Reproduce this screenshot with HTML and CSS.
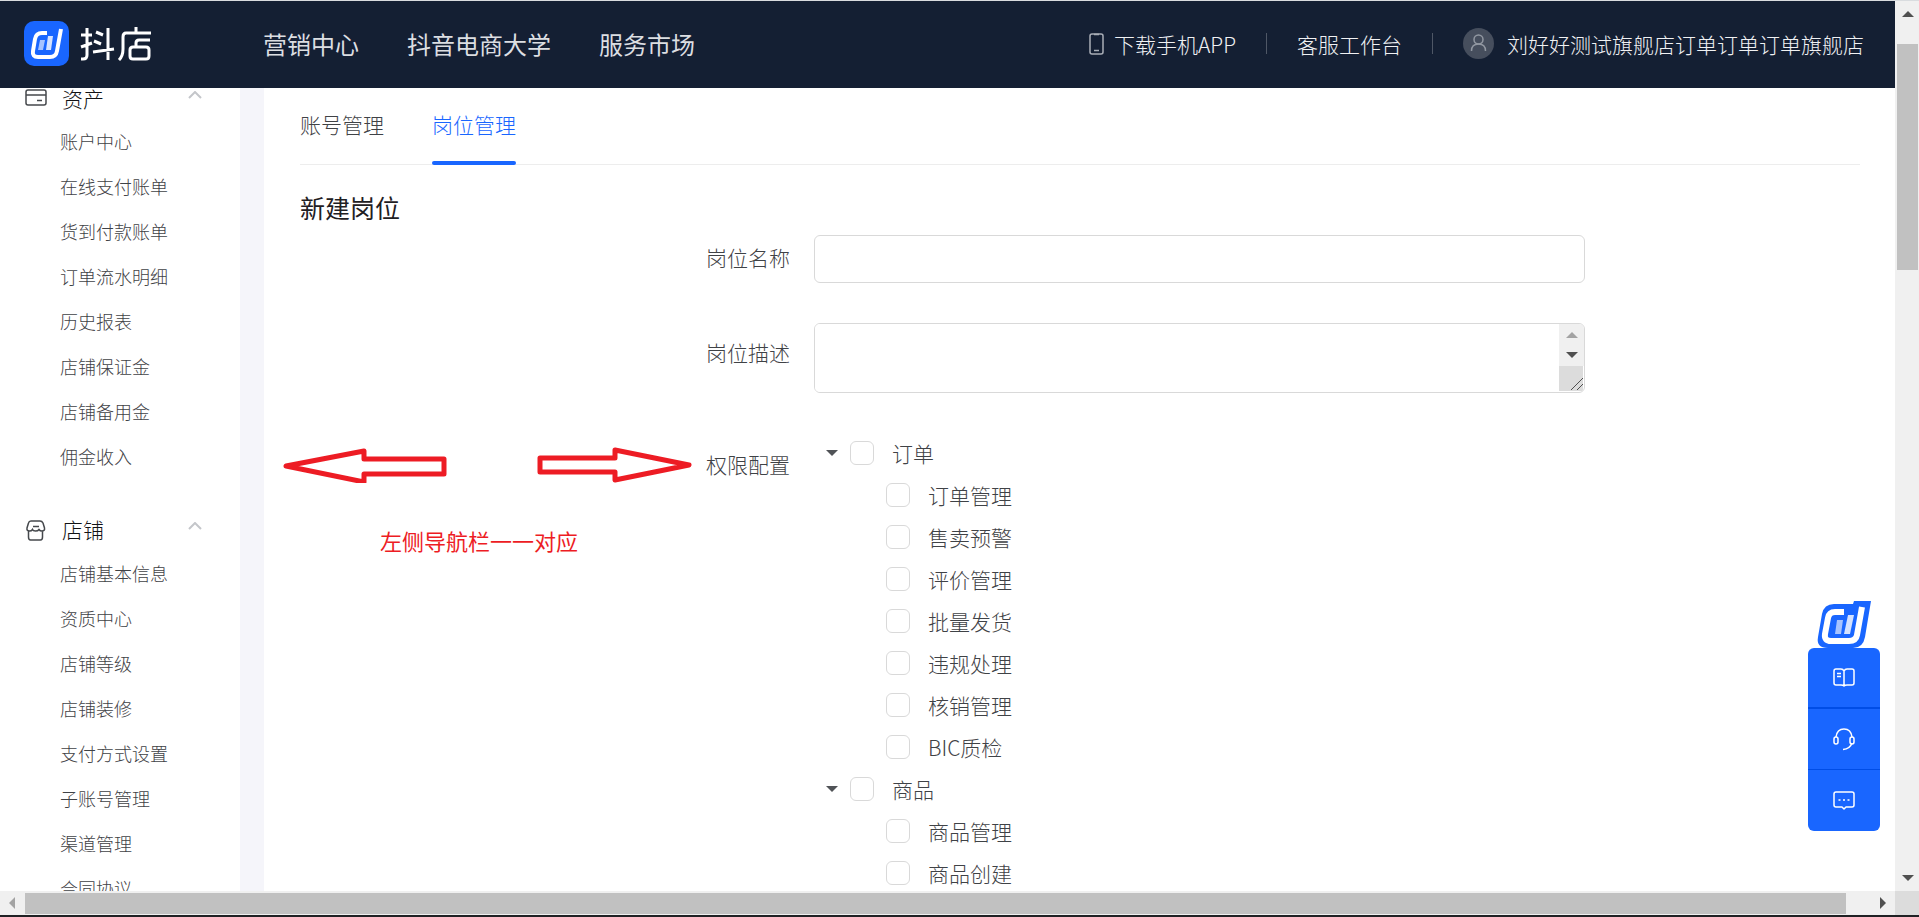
FILE: index.html
```html
<!DOCTYPE html>
<html lang="zh-CN">
<head>
<meta charset="utf-8">
<title>抖店 - 岗位管理</title>
<link rel="stylesheet" href="styles.css">
</head>
<body>
<div class="window">
  <div class="viewport">
    <header class="header">
      <a class="brand" href="#">
        <svg class="brand-mark" viewBox="0 0 45 45"><rect width="45" height="45" rx="10" fill="#1966ff"/><path d="M23 12h-5q-6 0-7 6l-2 12q-1 6 5 6h12q6 0 7-6l4-22" fill="none" stroke="#fff" stroke-width="4"/><path d="M16 19h5l-2 10h-5z" fill="#a6c3ff"/><path d="M24 15h5l-2 14h-5z" fill="#d4e2ff"/></svg>
        <svg class="brand-name" viewBox="0 0 71 34" role="img" aria-label="抖店" fill="none" stroke="#fff" stroke-width="3"><path d="M1 8h11M7 1v27q0 4-4 4H1M1 20l11-4M16 5l7 3M14 14l7 3M13 25l21-3M28 1v32M56 0v5M71 6H46q-3 0-3 4v12q0 7-4 11M70 13H59q-3 0-3 3v4M53 20h13q3 0 3 3v6q0 3-3 3H53q-3 0-3-3v-6q0-3 3-3z"/></svg>
      </a>
      <nav class="topnav"><a href="#">营销中心</a><a href="#">抖音电商大学</a><a href="#">服务市场</a></nav>
      <div class="tools">
        <a class="tool" href="#"><svg width="15" height="22" viewBox="0 0 15 22" fill="none" stroke="#a9aeb7" stroke-width="1.500"><rect x="1" y="1" width="13" height="20" rx="2"/><path d="M5 1.500h5M5 17.500h5"/></svg>下载手机APP</a>
        <i class="split"></i>
        <a class="tool" href="#">客服工作台</a>
        <i class="split"></i>
        <a class="tool user" href="#"><svg width="31" height="31" viewBox="0 0 31 31"><circle cx="15.500" cy="15.500" r="15.500" fill="#464e5d"/><g fill="none" stroke="#9298a2" stroke-width="1.500"><circle cx="15.500" cy="11.500" r="4.500"/><path d="M8.500 23q0-7 7-7t7 7"/></g></svg>刘好好测试旗舰店订单订单订单旗舰店</a>
      </div>
    </header>
    <div class="body">
      <aside class="sidebar">
        <section class="group">
          <h2><svg width="22" height="18" viewBox="0 0 22 18" fill="none" stroke="#45484c" stroke-width="1.500"><rect x="1" y="1" width="20" height="15" rx="2"/><path d="M1 6h20M12 11.500h5"/></svg><span>资产</span><svg class="fold" width="14" height="8" viewBox="0 0 14 8"><path d="M1 7l6-6 6 6"/></svg></h2>
          <a href="#">账户中心</a><a href="#">在线支付账单</a><a href="#">货到付款账单</a><a href="#">订单流水明细</a><a href="#">历史报表</a><a href="#">店铺保证金</a><a href="#">店铺备用金</a><a href="#">佣金收入</a>
        </section>
        <section class="group">
          <h2><svg width="22" height="21" viewBox="-1 0 22 21" fill="none" stroke="#45484c" stroke-width="1.500"><path d="M5 1h9q2 0 3 2l1.500 5q.5 3-2.500 3-2 0-3-1.500Q12 11 9.500 11T6.500 9.500Q5.500 11 3.500 11 .5 11 1 8l1.500-5Q3 1 5 1zM2.500 11v6q0 3 2 3h10q2 0 2-3v-6M7 6.500h6"/></svg><span>店铺</span><svg class="fold" width="14" height="8" viewBox="0 0 14 8"><path d="M1 7l6-6 6 6"/></svg></h2>
          <a href="#">店铺基本信息</a><a href="#">资质中心</a><a href="#">店铺等级</a><a href="#">店铺装修</a><a href="#">支付方式设置</a><a href="#">子账号管理</a><a href="#">渠道管理</a><a href="#">合同协议</a>
        </section>
      </aside>
      <main class="main">
        <div class="tabs"><a href="#">账号管理</a><a class="active" href="#">岗位管理</a></div>
        <h1>新建岗位</h1>
        <form class="form">
          <label class="label" for="name">岗位名称</label>
          <input class="field" id="name" type="text">
          <label class="label label-desc" for="desc">岗位描述</label>
          <div class="area">
            <textarea id="desc"></textarea>
            <div class="area-bar"><svg viewBox="0 0 25 67"><path fill="#f0f0f0" d="M0 0h25v42H0z"/><path fill="#a3a3a3" d="M7 14l6-6 6 6z"/><path fill="#505050" d="M7 28h12l-6 6z"/><path fill="#dcdcdc" d="M0 42h24v25H0z"/><path d="M12 66l12-12M18 66l6-6" stroke="#505050"/></svg></div>
          </div>
          <span class="label label-tree">权限配置</span>
          <div class="tree">
            <div class="node"><span class="caret"></span><label><input type="checkbox">订单</label></div>
            <div class="node leaf"><label><input type="checkbox">订单管理</label></div>
            <div class="node leaf"><label><input type="checkbox">售卖预警</label></div>
            <div class="node leaf"><label><input type="checkbox">评价管理</label></div>
            <div class="node leaf"><label><input type="checkbox">批量发货</label></div>
            <div class="node leaf"><label><input type="checkbox">违规处理</label></div>
            <div class="node leaf"><label><input type="checkbox">核销管理</label></div>
            <div class="node leaf"><label><input type="checkbox">BIC质检</label></div>
            <div class="node"><span class="caret"></span><label><input type="checkbox">商品</label></div>
            <div class="node leaf"><label><input type="checkbox">商品管理</label></div>
            <div class="node leaf"><label><input type="checkbox">商品创建</label></div>
          </div>
        </form>
      </main>
    </div>
    <div class="note">
      <svg width="410" height="36" viewBox="0 0 410 36" fill="none" stroke="#ed1c24" stroke-width="5"><path d="M3 19L81 4v8h80v15H81v8z" stroke-linejoin="round"/><path d="M257 11h75V3l74 15-74 15v-8h-75z" stroke-linejoin="round"/></svg>
      <p>左侧导航栏一一对应</p>
    </div>
    <div class="dock">
      <svg class="dock-logo" width="56" height="47" viewBox="0 0 56 47"><path fill="#1966ff" d="M38 0h17l-6 36q-2 11-12 11H12Q0 47 2 36L6 13Q8 3 18 3h19z"/><path d="M28 11h-9q-6 0-7 6l-3 16q-1 7 6 7h18q7 0 8-6l5-28" fill="none" stroke="#fff" stroke-width="6"/><path d="M21 19h6l-2 14h-6z" fill="#a6c3ff"/><path d="M32 14h6l-4 19h-6z" fill="#d4e2ff"/></svg>
      <button type="button" aria-label="帮助手册"><svg width="22" height="20" viewBox="0 0 22 20"><path d="M11 3Q10 1 8 1H3Q1 1 1 3v12q0 2 2 2h5q2 0 3 1 1-1 3-1h5q2 0 2-2V3q0-2-2-2h-5q-2 0-3 2zM11 3v15M4 5.500h4M4 8.500h4"/></svg></button>
      <button type="button" aria-label="在线客服"><svg width="22" height="23" viewBox="0 0 22 23"><path d="M3 9q1-8 8-8t8 8M19 15q-2 6-9 6.500"/><rect x="1" y="9" width="4" height="7" rx="2"/><rect x="17" y="9" width="4" height="7" rx="2"/></svg></button>
      <button type="button" aria-label="消息反馈"><svg width="22" height="19" viewBox="0 0 22 19"><path d="M3 1h16q2 0 2 2v11q0 2-2 2h-6l-2 2-2-2H3q-2 0-2-2V3q0-2 2-2zM5.500 9h2M10 9h2M14.500 9h2"/></svg></button>
    </div>
  </div>
  <div class="vbar"><svg width="12" height="6" viewBox="0 0 12 6"><path d="M0 6l6-6 6 6z"/></svg><div class="vtrack"><div class="vthumb"></div></div><svg width="12" height="6" viewBox="0 0 12 6"><path d="M0 0h12L6 6z"/></svg></div>
  <div class="hbar"><svg class="dim" width="6" height="12" viewBox="0 0 6 12"><path d="M6 0v12L0 6z"/></svg><div class="htrack"><div class="hthumb"></div></div><svg width="6" height="12" viewBox="0 0 6 12"><path d="M0 0v12l6-6z"/></svg></div>
  <div class="corner"></div>
</div>
</body>
</html>
```
FILE: styles.css
```css
* { box-sizing: border-box; }
body { margin: 0; font-family: "Noto Sans CJK SC", "Noto Sans", sans-serif; font-weight: 300; color: #3f4246; background: #fff; }
a { color: inherit; text-decoration: none; }
h1, h2, p { margin: 0; font-weight: inherit; }
svg { flex: none; display: block; }

.window { height: 100vh; display: grid; grid-template: minmax(0, 1fr) 24px / minmax(0, 1fr) 24px; border-top: 1px solid #d9dcdf; border-bottom: 2px solid #202124; }
.viewport { position: relative; display: flex; flex-direction: column; overflow: hidden; }

.header { flex: none; height: 87px; background: #141f33; color: #f0f1f3; display: flex; align-items: center; padding: 0 31px 2px 24px; }
.brand { display: flex; align-items: center; gap: 11px; margin-right: 112px; }
.brand-mark { width: 45px; }
.brand-name { width: 71px; }
.topnav { display: flex; gap: 48px; font-size: 24px; line-height: 36px; font-weight: 400; color: #dcdee2; }
.tools { margin-left: auto; display: flex; align-items: center; font-size: 21px; line-height: 32px; }
.tool { display: flex; align-items: center; gap: 10px; white-space: nowrap; }
.user { gap: 13px; }
.split { width: 1px; height: 21px; background: #4f5766; margin: 0 30px; }

.body { flex: 1; min-height: 0; display: flex; background: #f5f5fa; }
.sidebar { flex: none; width: 240px; margin-right: 24px; background: #fff; overflow: hidden; font-size: 18px; }
.group { display: flex; flex-direction: column; padding-bottom: 40px; }
.group h2 { display: flex; align-items: flex-start; height: 31px; padding: 1px 38px 0 25px; font-size: 21px; line-height: 18px; color: #111214; }
.group + .group h2 { height: 32px; }
.group h2 span { width: 90px; margin-left: 15px; }
.group a { padding-left: 60px; line-height: 45px; }
.fold { margin: 2px 0 0 auto; fill: none; stroke: #c4c6ca; stroke-width: 2; }

.main { flex: 1; min-width: 0; background: #fff; padding: 0 35px 0 36px; overflow: hidden; font-size: 21px; }
.tabs { height: 77px; display: flex; gap: 48px; border-bottom: 1px solid #ededed; }
.tabs a { height: 77px; line-height: 73px; }
.tabs .active { color: #1966ff; position: relative; }
.tabs .active::after { content: ""; position: absolute; left: 0; right: 0; bottom: 0; height: 4px; border-radius: 2px; background: #1966ff; }
.main h1 { margin-top: 22px; font-size: 25px; line-height: 40px; font-weight: 400; color: #1f2023; }

.form { display: grid; grid-template-columns: 514fr 771fr 275fr; align-items: start; margin-top: 8px; }
.label { grid-column: 1; padding-right: 24px; text-align: right; line-height: 44px; }
.label-desc, .area { margin-top: 40px; }
.label-desc { line-height: 58px; }
.label-tree { margin-top: 48px; line-height: 46px; }
.field { width: 100%; height: 48px; border: 1px solid #d9d9d9; border-radius: 6px; font: inherit; padding: 0 16px; }
.area { display: flex; height: 70px; border: 1px solid #d9d9d9; border-radius: 6px; overflow: hidden; }
.area textarea { flex: 1; min-width: 0; border: 0; resize: none; font: inherit; padding: 4px 16px; outline: 0; }
.area-bar { width: 25px; }
.tree { margin-top: 39px; padding-left: 12px; }
.node { display: flex; align-items: center; height: 42px; }
.leaf { padding-left: 60px; }
.caret { width: 12px; margin-right: 12px; border: 6px solid transparent; border-top-color: #505357; border-bottom: 0; }
.node label { display: flex; align-items: center; gap: 18px; }
.node input { appearance: none; width: 24px; height: 24px; margin: 0; border: 1px solid #d9d9d9; border-radius: 6px; background: #fff; }

.note { position: absolute; left: 283px; top: 446px; color: #ed1c24; font-size: 22px; font-weight: 400; }
.note p { margin: 41px 0 0 97px; line-height: 32px; }

.dock { position: absolute; right: 15px; bottom: 60px; width: 72px; display: flex; flex-direction: column; }
.dock-logo { align-self: center; }
.dock button { height: 61px; padding: 0; border: 0; border-bottom: 1px solid #004de6; background: #1966ff; display: grid; place-items: center; }
.dock button svg { fill: none; stroke: #fff; stroke-width: 1.5; stroke-linejoin: round; }
.dock-logo + button { border-radius: 6px 6px 0 0; border-bottom-width: 2px; }
.dock button:last-child { border-radius: 0 0 6px 6px; border-bottom: 0; }

.vbar { background: #f0f0f0; display: flex; flex-direction: column; align-items: center; padding: 10px 1px 10px 2px; fill: #505050; }
.vtrack { flex: 1; width: 100%; padding: 27px 0 8px; }
.vthumb { height: 27.4%; background: #c1c1c1; }
.hbar { background: #f0f0f0; display: flex; align-items: center; padding: 0 9px; fill: #505050; }
.dim { fill: #a3a3a3; }
.htrack { flex: 1; height: 21px; padding: 0 34px 0 10px; }
.hthumb { height: 100%; background: #c1c1c1; }
.corner { background: #dcdcdc; }
```
